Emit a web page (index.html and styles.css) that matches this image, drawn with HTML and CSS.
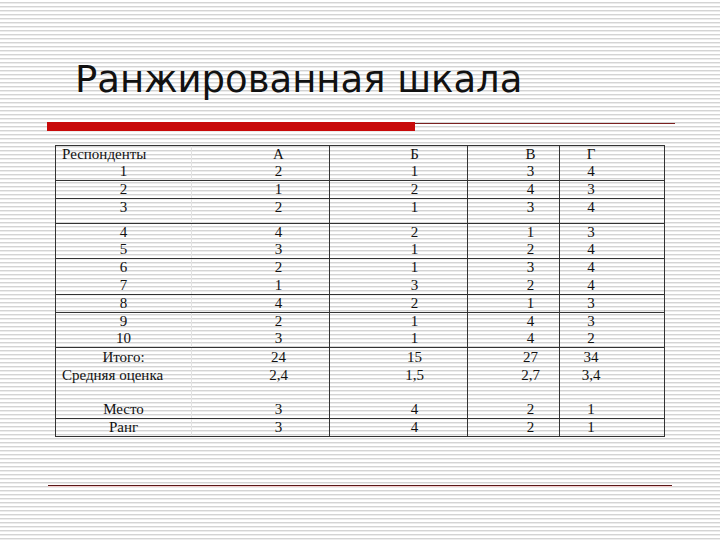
FILE: index.html
```html
<!DOCTYPE html>
<html lang="ru">
<head>
<meta charset="utf-8">
<title>Ранжированная шкала</title>
<link rel="stylesheet" href="styles.css">
</head>
<body>
<div class="slide">
  <h1 class="title">Ранжированная шкала</h1>
  <div class="rule">
    <div class="rule-thick"></div>
    <div class="rule-thin"></div>
  </div>
  <div class="table">
    <div class="row h17"><div class="c c0 left">Респонденты</div><div class="c ca">А</div><div class="c cb">Б</div><div class="c cv">В</div><div class="c cg">Г</div></div>
    <div class="row h18 ln"><div class="c c0">1</div><div class="c ca">2</div><div class="c cb">1</div><div class="c cv">3</div><div class="c cg">4</div></div>
    <div class="row h18 ln"><div class="c c0">2</div><div class="c ca">1</div><div class="c cb">2</div><div class="c cv">4</div><div class="c cg">3</div></div>
    <div class="row h16"><div class="c c0">3</div><div class="c ca">2</div><div class="c cb">1</div><div class="c cv">3</div><div class="c cg">4</div></div>
    <div class="row h9 ln"><div class="c c0"></div><div class="c ca"></div><div class="c cb"></div><div class="c cv"></div><div class="c cg"></div></div>
    <div class="row h17"><div class="c c0">4</div><div class="c ca">4</div><div class="c cb">2</div><div class="c cv">1</div><div class="c cg">3</div></div>
    <div class="row h18 ln"><div class="c c0">5</div><div class="c ca">3</div><div class="c cb">1</div><div class="c cv">2</div><div class="c cg">4</div></div>
    <div class="row h17"><div class="c c0">6</div><div class="c ca">2</div><div class="c cb">1</div><div class="c cv">3</div><div class="c cg">4</div></div>
    <div class="row h19 ln"><div class="c c0">7</div><div class="c ca">1</div><div class="c cb">3</div><div class="c cv">2</div><div class="c cg">4</div></div>
    <div class="row h18 ln"><div class="c c0">8</div><div class="c ca">4</div><div class="c cb">2</div><div class="c cv">1</div><div class="c cg">3</div></div>
    <div class="row h17"><div class="c c0">9</div><div class="c ca">2</div><div class="c cb">1</div><div class="c cv">4</div><div class="c cg">3</div></div>
    <div class="row h18 ln"><div class="c c0">10</div><div class="c ca">3</div><div class="c cb">1</div><div class="c cv">4</div><div class="c cg">2</div></div>
    <div class="row h18"><div class="c c0">Итого:</div><div class="c ca">24</div><div class="c cb">15</div><div class="c cv">27</div><div class="c cg">34</div></div>
    <div class="row h18"><div class="c c0 left">Средняя оценка</div><div class="c ca">2,4</div><div class="c cb">1,5</div><div class="c cv">2,7</div><div class="c cg">3,4</div></div>
    <div class="row h17"><div class="c c0"></div><div class="c ca"></div><div class="c cb"></div><div class="c cv"></div><div class="c cg"></div></div>
    <div class="row h18 ln"><div class="c c0">Место</div><div class="c ca">3</div><div class="c cb">4</div><div class="c cv">2</div><div class="c cg">1</div></div>
    <div class="row h17"><div class="c c0">Ранг</div><div class="c ca">3</div><div class="c cb">4</div><div class="c cv">2</div><div class="c cg">1</div></div>
  </div>
  <div class="bottom-rule"></div>
</div>
</body>
</html>
```

FILE: styles.css
```css
html, body {
  margin: 0;
  padding: 0;
}

body {
  width: 720px;
  height: 540px;
  overflow: hidden;
  background: repeating-linear-gradient(to bottom,
    #ffffff 0px, #ffffff 2px,
    #d4d4d4 2px, #d4d4d4 3px,
    #ececec 3px, #ececec 4px);
}

.slide {
  padding-top: 58px;
}

.title {
  margin: 0 0 0 75px;
  font-family: "DejaVu Sans", sans-serif;
  font-weight: normal;
  font-size: 37px;
  line-height: 44px;
  height: 44px;
  color: #111;
  white-space: nowrap;
}

.rule {
  display: flex;
  align-items: flex-start;
  margin-top: 20px;
  height: 9px;
}

.rule-thick {
  margin-left: 47px;
  width: 368px;
  height: 9px;
  background: #c80a0a;
}

.rule-thin {
  margin-top: 1px;
  width: 260px;
  height: 1px;
  background: #7a2020;
}

.table {
  margin: 14px 0 0 55px;
  width: 608px;
  border: 1px solid #333;
  font-family: "Liberation Serif", "Times New Roman", serif;
  font-size: 15px;
  color: #111;
}

.row {
  display: grid;
  grid-template-columns: 135px 138px 138px 92px 105px;
  box-sizing: border-box;
}

.row.ln {
  border-bottom: 1px solid #333;
}

.h9 { height: 9px; }
.h16 { height: 16px; }
.h17 { height: 17px; }
.h18 { height: 18px; }
.h19 { height: 19px; }

.c {
  display: flex;
  align-items: center;
  justify-content: center;
  box-sizing: border-box;
  line-height: 1;
  white-space: nowrap;
}

.c0.left {
  justify-content: flex-start;
  padding-left: 6px;
}

.ca {
  border-left: 1px solid #e2e2e2;
  padding-left: 36px;
}

.cb {
  border-left: 1px solid #333;
  padding-left: 32px;
}

.cv {
  border-left: 1px solid #333;
  padding-left: 34px;
}

.cg {
  border-left: 1px solid #333;
  padding-right: 42px;
}

.bottom-rule {
  margin: 48px 0 0 48px;
  width: 624px;
  height: 0;
  border-top: 1px solid #5a1818;
  border-bottom: 1px solid #f2cccc;
}
```
